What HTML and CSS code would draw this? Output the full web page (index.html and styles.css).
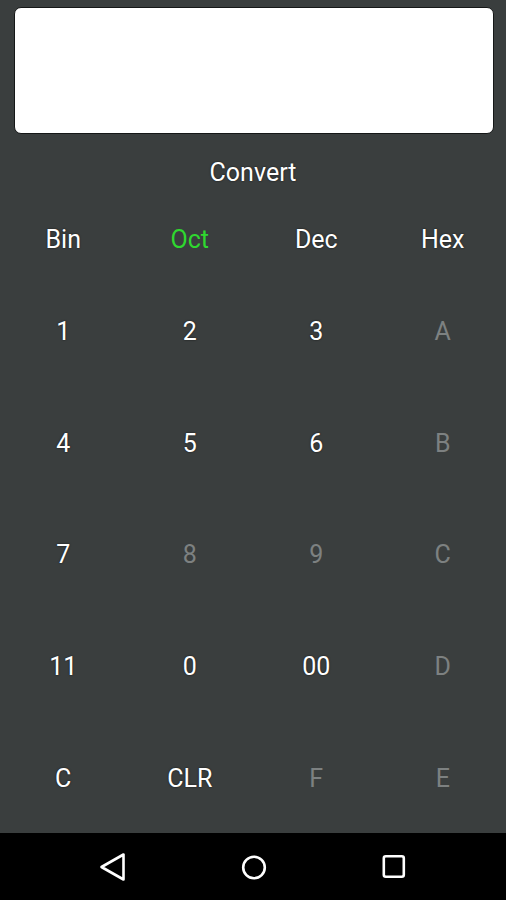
FILE: index.html
```html
<!DOCTYPE html>
<html lang="en">
<head>
    <meta charset="UTF-8">
    <meta name="viewport" content="width=device-width, initial-scale=1.0">
    <title>Converter</title>
    <link rel="stylesheet" href="styles.css">
</head>
<body>
    <div class="screen">
        <div class="display"></div>
        <div class="convert">Convert</div>
        <div class="bases">
            <div class="base">Bin</div>
            <div class="base active">Oct</div>
            <div class="base">Dec</div>
            <div class="base">Hex</div>
        </div>
        <div class="keys">
            <div class="key">1</div>
            <div class="key">2</div>
            <div class="key">3</div>
            <div class="key off">A</div>

            <div class="key">4</div>
            <div class="key">5</div>
            <div class="key">6</div>
            <div class="key off">B</div>

            <div class="key">7</div>
            <div class="key off">8</div>
            <div class="key off">9</div>
            <div class="key off">C</div>

            <div class="key">11</div>
            <div class="key">0</div>
            <div class="key">00</div>
            <div class="key off">D</div>

            <div class="key">C</div>
            <div class="key">CLR</div>
            <div class="key off">F</div>
            <div class="key off">E</div>
        </div>
    </div>
    <div class="navbar">
        <svg class="nav-icon" width="30" height="34" viewBox="0 0 30 34">
            <path d="M3.5 17 L25.5 4.5 L25.5 29.5 Z" fill="none" stroke="#fff" stroke-width="2.6" stroke-linejoin="round"/>
        </svg>
        <svg class="nav-icon" width="30" height="34" viewBox="0 0 30 34">
            <circle cx="15" cy="17.5" r="10.8" fill="none" stroke="#fff" stroke-width="2.6"/>
        </svg>
        <svg class="nav-icon" width="30" height="34" viewBox="0 0 30 34">
            <rect x="4.8" y="6.2" width="20" height="20.6" rx="2" fill="none" stroke="#fff" stroke-width="2.6"/>
        </svg>
    </div>
</body>
</html>
```

FILE: styles.css
```css
html, body {
    margin: 0;
    padding: 0;
}

body {
    width: 506px;
    height: 900px;
    background: #3a3e3e;
    font-family: Roboto, "Liberation Sans", sans-serif;
    color: #ffffff;
    overflow: hidden;
}

.screen {
    height: 833px;
    display: flex;
    flex-direction: column;
}

.display {
    margin: 7px 12px 0 14px;
    height: 125px;
    background: #ffffff;
    border: 1px solid #151717;
    border-radius: 7px;
}

.convert {
    height: 76px;
    line-height: 78px;
    text-align: center;
    font-size: 25px;
    text-shadow: 0 0 2px rgba(0, 0, 0, 0.7);
}

.bases {
    height: 58px;
    display: grid;
    grid-template-columns: repeat(4, 1fr);
    margin-bottom: 7px;
}

.base {
    line-height: 60px;
    text-align: center;
    font-size: 25px;
    text-shadow: 0 0 2px rgba(0, 0, 0, 0.7);
}

.base.active {
    color: #2fd82f;
    text-shadow: none;
}

.keys {
    flex: 1;
    display: grid;
    grid-template-columns: repeat(4, 1fr);
    grid-template-rows: repeat(5, 1fr);
}

.key {
    display: flex;
    align-items: center;
    justify-content: center;
    padding-top: 2px;
    font-size: 25px;
    text-shadow: 0 0 2px rgba(0, 0, 0, 0.7);
}

.key.off {
    color: #7d8181;
    text-shadow: none;
}

.navbar {
    height: 67px;
    background: #000000;
    display: flex;
    align-items: center;
    padding-left: 98px;
    gap: 110.5px;
}

.nav-icon {
    display: block;
}
```
